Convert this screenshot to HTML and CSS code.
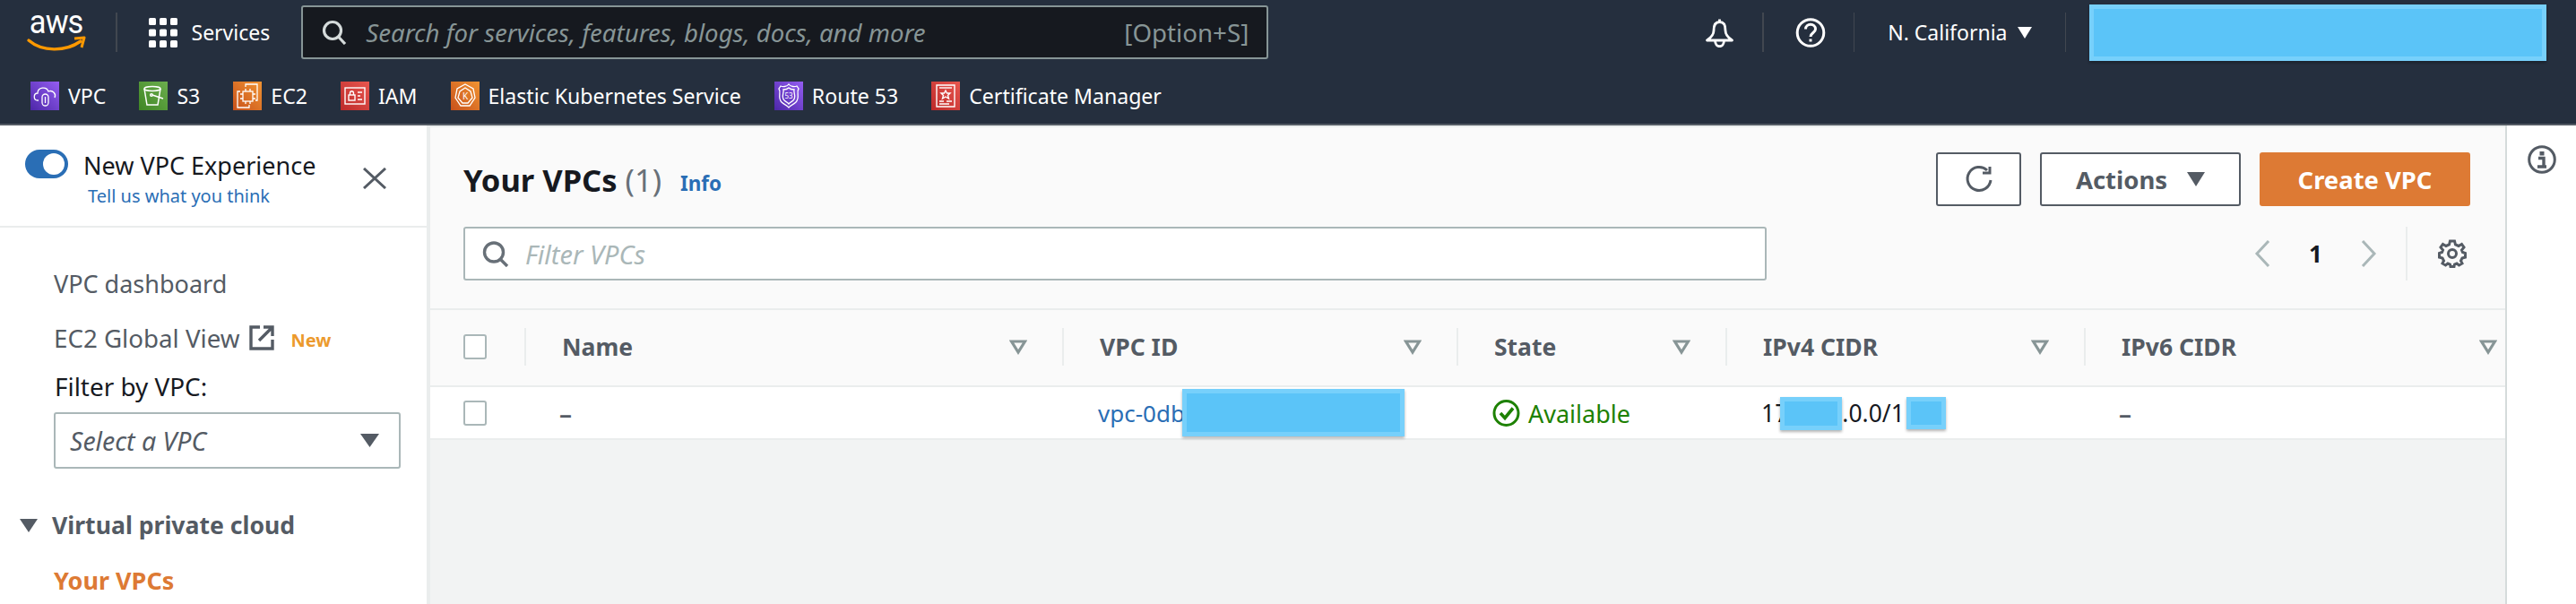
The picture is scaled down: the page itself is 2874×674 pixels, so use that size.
FILE: index.html
```html
<!DOCTYPE html>
<html lang="en">
<head>
<meta charset="utf-8">
<title>Your VPCs</title>
<link rel="stylesheet" href="styles.css">
</head>
<body>
<header class="topbar">
  <div class="top-row">
    <div class="aws-logo"><span class="aws-text">aws</span><svg width="64" height="16" viewBox="0 24 64 16"><path d="M1 28 C16 41 42 41 59 29" fill="none" stroke="#f90" stroke-width="3.4" stroke-linecap="round"/><path d="M52 26 L63 25 L60 36" fill="none" stroke="#f90" stroke-width="3" stroke-linejoin="round"/></svg></div>
    <span class="top-sep sep-logo"></span>
    <svg class="grid-icon" width="32" height="33" viewBox="0 0 32 33" fill="#fff"><rect width="8" height="8" rx="1.5"/><rect x="12" width="8" height="8" rx="1.5"/><rect x="24" width="8" height="8" rx="1.5"/><rect y="12.500" width="8" height="8" rx="1.5"/><rect x="12" y="12.500" width="8" height="8" rx="1.5"/><rect x="24" y="12.500" width="8" height="8" rx="1.500"/><rect y="25" width="8" height="8" rx="1.5"/><rect x="12" y="25" width="8" height="8" rx="1.5"/><rect x="24" y="25" width="8" height="8" rx="1.5"/></svg>
    <span class="services">Services</span>
    <div class="search">
      <svg width="28" height="28" viewBox="0 0 28 28" fill="none" stroke="#d5dbdb" stroke-width="3.200"><circle cx="12" cy="12" r="9.500"/><path d="M18.500 19 L26 27"/></svg>
      <span class="search-text">Search for services, features, blogs, docs, and more</span>
      <span class="search-key">[Option+S]</span>
    </div>
    <div class="top-right">
      <svg class="bell" width="33" height="33" viewBox="0 0 33 33" fill="none" stroke="#fff" stroke-width="2.800" stroke-linejoin="round"><path d="M16.500 1.500 V4.500 M16.500 4.500 C11 4.500 10 9 10 14 C10 19 7 22 2.500 25 H30.500 C26 22 23 19 23 14 C23 9 22 4.500 16.500 4.500 Z"/><path d="M11.500 25 C11.500 34 21.500 34 21.500 25"/></svg>
      <span class="top-sep sep-bell"></span>
      <svg class="help" width="34" height="33" viewBox="0 0 34 33" fill="none" stroke="#fff" stroke-width="3"><circle cx="17" cy="16.500" r="14.800"/><path d="M11.500 12.500 C11.500 5.500 22.500 5.500 22.500 12.500 C22.500 16.500 17 16.500 17 21"/><path d="M17 23.500 V26.500"/></svg>
      <span class="top-sep sep-help"></span>
      <span class="region">N. California</span>
      <svg class="region-caret" width="16" height="13" viewBox="0 0 16 13" fill="#fff"><path d="M0 0 H16 L8 13 Z"/></svg>
      <span class="top-sep sep-region"></span>
      <span class="redact redact-account"></span>
    </div>
  </div>
  <nav class="favorites">
    <a class="fav"><span class="svc svc-purple"><svg width="32" height="32" viewBox="0 0 32 32" fill="none" stroke="#fff" stroke-width="1.300"><path d="M9 21 H8 C3 21 3 13 8 13 C8 6 18 5 20 11 C25 9 29 14 27 18"/><rect x="13" y="14" width="7" height="13" rx="3.500"/><path d="M16.500 17 V24"/></svg></span><span>VPC</span></a>
    <a class="fav"><span class="svc svc-green"><svg width="32" height="32" viewBox="0 0 32 32" fill="none" stroke="#fff" stroke-width="1.500"><ellipse cx="15" cy="8" rx="9" ry="2.500"/><path d="M6 8 L9 26 H21 L24 8"/><circle cx="14" cy="15" r="1.300"/><path d="M15 15 L27 19"/></svg></span><span>S3</span></a>
    <a class="fav"><span class="svc svc-orange"><svg width="32" height="32" viewBox="0 0 32 32" fill="none" stroke="#fff" stroke-width="1.300"><rect x="11" y="11" width="11" height="11"/><path d="M14 8 V11 M19 8 V11 M14 22 V25 M19 22 V25 M8 14 H11 M8 19 H11 M22 14 H25 M22 19 H25"/><path d="M14 6 V3 H27 V21 H25 M18 26 V29 H5 V11 H8"/></svg></span><span>EC2</span></a>
    <a class="fav"><span class="svc svc-red"><svg width="32" height="32" viewBox="0 0 32 32" fill="none" stroke="#fff" stroke-width="1.400"><rect x="5" y="7" width="22" height="18"/><rect x="9" y="15" width="7" height="6"/><path d="M10.500 15 V13 C10.500 10 14.500 10 14.500 13 V15 M19 12 H24 M19 16 H22 M19 20 H24"/></svg></span><span>IAM</span></a>
    <a class="fav"><span class="svc svc-orange"><svg width="32" height="32" viewBox="0 0 32 32" fill="none" stroke="#fff" stroke-width="1.300"><path d="M16 3 L25 8 L27 18 L21 27 H11 L5 18 L7 8 Z"/><path d="M16 7 L22 11 L24 18 L19 24 H13 L8 18 L10 11 Z"/><text x="16" y="20" class="svc-text svc-k">K</text></svg></span><span>Elastic Kubernetes Service</span></a>
    <a class="fav"><span class="svc svc-purple"><svg width="32" height="32" viewBox="0 0 32 32" fill="none" stroke="#fff" stroke-width="1.300"><path d="M16 3 C18 6 23 6 25 5 L27 8 C24 12 29 18 24 23 C21 26 18 26 16 29 C14 26 11 26 8 23 C3 18 8 12 5 8 L7 5 C9 6 14 6 16 3 Z"/><path d="M16 7 C18 9 20 9 22 9 C21 13 25 17 21 21 C19 23 17 23 16 25 C15 23 13 23 11 21 C7 17 11 13 10 9 C12 9 14 9 16 7 Z"/><text x="16" y="19" class="svc-text svc-53">53</text></svg></span><span>Route 53</span></a>
    <a class="fav"><span class="svc svc-red"><svg width="32" height="32" viewBox="0 0 32 32" fill="none" stroke="#fff" stroke-width="1.400"><path d="M6 4 H26 V28 H6 Z"/><path d="M9 7 H23"/><path d="M16 10 L17.500 13 H21 L18.500 15.500 L19.500 19 L16 17 L12.500 19 L13.500 15.500 L11 13 H14.500 Z"/><path d="M9 22 H14 M17 22 H23 M9 25 H20"/></svg></span><span>Certificate Manager</span></a>
  </nav>
</header>

<div class="app">
  <aside class="sidebar">
    <div class="side-head">
      <span class="toggle"><span class="knob"></span></span>
      <div class="side-title">
        <div class="new-exp">New VPC Experience</div>
        <a class="tell">Tell us what you think</a>
      </div>
      <svg class="close" width="26" height="24" viewBox="0 0 26 24" fill="none" stroke="#545b64" stroke-width="3"><path d="M1 1 L25 23 M25 1 L1 23"/></svg>
    </div>
    <div class="side-link first">VPC dashboard</div>
    <div class="side-link ec2">EC2 Global View
      <svg class="ext" width="28" height="28" viewBox="0 0 28 28" fill="none" stroke="#545b64" stroke-width="3.400"><path d="M12 2 H2 V26 H26 V16" /><path d="M11 17 L25 3 M16 2 H26 V12" /></svg>
      <span class="new-badge">New</span>
    </div>
    <div class="filter-label">Filter by VPC:</div>
    <div class="select"><span>Select a VPC</span><svg width="21" height="15" viewBox="0 0 21 15" fill="#545b64"><path d="M0 0 H21 L10.500 15 Z"/></svg></div>
    <div class="side-section"><svg width="20" height="15" viewBox="0 0 20 15" fill="#545b64"><path d="M0 0 H20 L10 15 Z"/></svg><span>Virtual private cloud</span></div>
    <div class="side-active">Your VPCs</div>
  </aside>

  <main class="main">
    <div class="panel-head">
      <div class="title-row">
        <h1 class="title">Your VPCs <span class="count">(1)</span></h1>
        <a class="info">Info</a>
        <div class="actions">
          <button class="btn btn-icon"><svg width="32" height="32" viewBox="0 0 32 32" fill="none" stroke="#545b64" stroke-width="3"><path d="M25 6 A13 13 0 1 0 29 17"/><path d="M28 2 V9 H20"/></svg></button>
          <button class="btn btn-actions">Actions<svg width="20" height="16" viewBox="0 0 20 16" fill="#545b64"><path d="M0 0 H20 L10 16 Z"/></svg></button>
          <button class="btn btn-primary">Create VPC</button>
        </div>
      </div>
      <div class="filter-row">
        <div class="filter-box">
          <svg width="30" height="29" viewBox="0 0 30 29" fill="none" stroke="#687078" stroke-width="3.400"><circle cx="13" cy="12.500" r="10.500"/><path d="M20 20 L28 28"/></svg>
          <span>Filter VPCs</span>
        </div>
        <div class="pager">
          <svg width="18" height="30" viewBox="0 0 18 30" fill="none" stroke="#aab7b8" stroke-width="3"><path d="M16 1 L3 15 L16 29"/></svg>
          <span class="page-num">1</span>
          <svg width="18" height="30" viewBox="0 0 18 30" fill="none" stroke="#aab7b8" stroke-width="3"><path d="M2 1 L15 15 L2 29"/></svg>
          <span class="pager-sep"></span>
          <svg class="gear" width="32" height="32" viewBox="0 0 32 32" fill="none" stroke="#545b64" stroke-width="3"><circle cx="16" cy="16" r="4.500"/><path d="M13.500 2 H18.500 L19.500 6 L23 7.500 L26.500 5.500 L29 9 L26.500 12 L27.500 14.500 L30.500 15.500 V20 L27 21 L25.500 24 L27 27 L23.500 29 L21 27 L18.500 28 L18 30.500 H14 L13.500 28 L11 27 L8.500 29 L5 27 L6.500 24 L5 21 L1.500 20 V15.500 L4.500 14.500 L5.500 12 L3 9 L5.500 5.500 L9 7.500 L12.500 6 Z"/></svg>
        </div>
      </div>
    </div>
    <div class="table">
      <div class="thead">
        <div class="th th-check"><span class="check"></span></div>
        <div class="th"><span class="cell-in"><span>Name</span><svg class="sort" width="20" height="17" viewBox="0 0 20 17" fill="none" stroke="#879596" stroke-width="3.200" stroke-linejoin="miter"><path d="M2.500 2 H17.500 L10 14 Z"/></svg></span></div>
        <div class="th"><span class="cell-in"><span>VPC ID</span><svg class="sort" width="20" height="17" viewBox="0 0 20 17" fill="none" stroke="#879596" stroke-width="3.200"><path d="M2.500 2 H17.500 L10 14 Z"/></svg></span></div>
        <div class="th"><span class="cell-in"><span>State</span><svg class="sort" width="20" height="17" viewBox="0 0 20 17" fill="none" stroke="#879596" stroke-width="3.200"><path d="M2.500 2 H17.500 L10 14 Z"/></svg></span></div>
        <div class="th"><span class="cell-in"><span>IPv4 CIDR</span><svg class="sort" width="20" height="17" viewBox="0 0 20 17" fill="none" stroke="#879596" stroke-width="3.200"><path d="M2.500 2 H17.500 L10 14 Z"/></svg></span></div>
        <div class="th th-last"><span class="cell-in"><span>IPv6 CIDR</span><svg class="sort" width="20" height="17" viewBox="0 0 20 17" fill="none" stroke="#879596" stroke-width="3.200"><path d="M2.500 2 H17.500 L10 14 Z"/></svg></span></div>
      </div>
      <div class="trow">
        <div class="td td-check"><span class="check"></span></div>
        <div class="td td-dash">–</div>
        <div class="td td-id"><a class="link">vpc-0db</a><span class="redact redact-id"></span></div>
        <div class="td td-state"><svg width="31" height="32" viewBox="0 0 31 32" fill="none" stroke="#1d8102" stroke-width="3"><circle cx="15.500" cy="16" r="13.500"/><path d="M9 16 L14 21.500 L23 10.500" stroke-width="3.600"/></svg><span>Available</span></div>
        <div class="td td-cidr">17<span class="redact redact-a"></span>.0.0/1<span class="redact redact-b"></span></div>
        <div class="td td-dash">–</div>
      </div>
    </div>
  </main>

  <aside class="rail">
    <svg width="32" height="32" viewBox="0 0 32 32" fill="none" stroke="#545b64" stroke-width="3"><circle cx="16" cy="16" r="14.300"/><rect x="13.500" y="7" width="5" height="4.500" fill="#545b64" stroke="none"/><path d="M12 14.500 H18 V23 M11 24 H21" stroke-width="3.400"/></svg>
  </aside>
</div>
</body>
</html>
```
FILE: styles.css
```css
* { box-sizing: border-box; }
html, body { margin: 0; height: 674px; overflow: hidden; }
body { font-family: "Noto Sans", "Open Sans", sans-serif; font-size: 27px; color: #16191f; background: #fff; display: flex; flex-direction: column; }
a { text-decoration: none; }

/* top bar */
.topbar { background: #252f3e; height: 140px; border-bottom: 2px solid #545b64; flex: none; }
.top-row { display: flex; align-items: center; height: 72px; padding-left: 31px; padding-right: 33px; }
.aws-logo { flex: none; width: 64px; display: flex; flex-direction: column; }
.aws-logo svg { display: block; margin-top: 7px; overflow: visible; }
.aws-text { display: block; font-family: Roboto, sans-serif; font-size: 37px; line-height: 19px; letter-spacing: -1px; color: #fff; padding-left: 2px; transform: scaleX(.93); transform-origin: left center; }
.svc-text { font-family: "Noto Sans", sans-serif; fill: #fff; stroke: none; text-anchor: middle; }
.svc-k { font-size: 10px; }
.svc-53 { font-size: 8px; }
.top-sep { width: 1.500px; height: 44px; background: #414750; flex: none; }
.sep-logo { margin-left: 34px; margin-right: 35px; }
.services { color: #fff; font-size: 23px; margin-left: 16px; }
.search { margin-left: 35px; width: 1079px; height: 60px; flex: none; background: #16191f; border: 2px solid #879596; border-radius: 3px; display: flex; align-items: center; padding: 0 20px 0 21px; }
.search-text { font-style: italic; color: #879596; font-size: 27.600px; margin-left: 21px; flex: 1; }
.search-key { color: #879596; font-size: 27.700px; }
.top-right { margin-left: auto; display: flex; align-items: center; }
.sep-bell { margin-left: 31px; margin-right: 35px; }
.sep-help { margin-left: 31px; margin-right: 37px; }
.region { color: #fff; font-size: 23px; }
.region-caret { margin-left: 11px; }
.sep-region { margin-left: 37px; margin-right: 26px; }

.redact { display: inline-block; background: #5bc4f8; border: 5px solid #77d0fb; box-shadow: 0 2px 3px rgba(0, 0, 0, .3); flex: none; }
.redact-account { width: 510px; height: 63px; }

.favorites { display: flex; align-items: center; padding: 19px 0 0 34px; gap: 37px; }
.fav { display: flex; align-items: center; gap: 10px; color: #fff; font-size: 23.100px; }
.svc { width: 32px; height: 32px; display: block; flex: none; }
.svc svg { display: block; }
.svc-purple { background: linear-gradient(45deg, #4d27a8, #945df2); }
.svc-green { background: linear-gradient(45deg, #3f8624, #6cae4e); }
.svc-orange { background: linear-gradient(45deg, #c8511b, #f09433); }
.svc-red { background: linear-gradient(45deg, #bd2a2a, #e8574f); }

/* layout */
.app { display: flex; flex: 1; min-height: 0; }
.sidebar { width: 480px; flex: none; border-right: 4px solid #eaeded; background: #fff; }
.main { flex: 1; min-width: 0; background: #f2f3f3; display: flex; flex-direction: column; }
.rail { width: 79px; flex: none; background: #fff; border-left: 2px solid #d5dbdb; padding: 22px 0 0 23px; }
.rail svg { display: block; }

/* sidebar */
.side-head { height: 114px; border-bottom: 2px solid #eaeded; padding: 27px 45px 0 28px; display: flex; align-items: flex-start; }
.toggle { width: 48px; height: 32px; border-radius: 16px; background: #2a6eb5; flex: none; position: relative; margin-right: 17px; }
.knob { position: absolute; right: 4px; top: 4px; width: 24px; height: 24px; border-radius: 50%; background: #fff; }
.side-title { margin-top: 2px; }
.new-exp { line-height: 32px; font-size: 27px; color: #16191f; }
.tell { display: block; margin: 4px 0 0 5px; line-height: 28px; font-size: 20px; color: #2a6eb5; }
.close { margin-left: auto; margin-top: 20px; flex: none; }
.side-link { margin-left: 60px; line-height: 36px; color: #545b64; font-size: 27px; }
.side-link.first { margin-top: 45px; }
.ec2 { margin-top: 21px; display: flex; align-items: center; font-size: 27.700px; }
.ext { margin-left: 11px; flex: none; }
.new-badge { color: #ec9a2d; font-weight: 700; font-size: 20px; margin-left: 18px; margin-top: 6px; }
.filter-label { margin: 15px 0 0 61px; line-height: 36px; font-size: 27.900px; color: #16191f; }
.select { margin: 11px 0 0 60px; width: 387px; height: 63px; border: 2px solid #aab7b8; border-radius: 3px; background: #fff; display: flex; align-items: center; justify-content: space-between; padding: 0 22px 0 16px; font-style: italic; color: #545b64; font-size: 28.500px; }
.side-section { display: flex; align-items: center; gap: 16px; margin: 45px 0 0 22px; line-height: 36px; font-weight: 700; color: #545b64; font-size: 26.600px; }
.side-active { margin: 26px 0 0 60px; line-height: 36px; font-weight: 700; color: #dd7a34; font-size: 27px; }

/* panel */
.panel-head { background: #fafafa; border-top: 2px solid #eaeded; padding: 28px 39px 0 37px; height: 204px; flex: none; }
.title-row { display: flex; align-items: center; height: 60px; }
.title { margin: 0; font-size: 34.500px; font-weight: 700; color: #16191f; }
.count { font-weight: 400; color: #687078; }
.info { color: #2a6eb5; font-weight: 700; font-size: 22.500px; margin-left: 21px; margin-top: 8px; }
.actions { margin-left: auto; display: flex; gap: 21px; }
.btn { height: 60px; border: 2px solid #545b64; border-radius: 3px; background: #fff; font: inherit; font-weight: 700; color: #545b64; display: flex; align-items: center; justify-content: center; }
.btn-icon { width: 95px; padding: 0; }
.btn-actions { width: 224px; gap: 22px; font-size: 27.500px; }
.btn-primary { width: 235px; background: #dd7a34; border-color: #dd7a34; color: #fff; font-size: 27.400px; }
.filter-row { display: flex; align-items: center; margin-top: 23px; }
.filter-box { width: 1454px; height: 60px; background: #fff; border: 2px solid #aab7b8; border-radius: 3px; display: flex; align-items: center; gap: 18px; padding-left: 19px; font-style: italic; color: #aab7b8; font-size: 29px; flex: none; }
.pager { margin-left: auto; margin-right: 4px; display: flex; align-items: center; }
.page-num { width: 101px; text-align: center; font-weight: 700; font-size: 26px; color: #16191f; }
.pager-sep { width: 2px; height: 60px; background: #eaeded; margin: 0 34px 0 32px; }

/* table */
.table { flex: none; }
.thead, .trow { display: grid; grid-template-columns: 105px 600px 440px 300px 400px 1fr; }
.thead { background: #fafafa; border-top: 2px solid #eaeded; border-bottom: 2px solid #eaeded; height: 88px; padding: 20px 0 22px; }
.trow { background: #fff; height: 59px; border-bottom: 2px solid #eaeded; }
.th { height: 42px; border-left: 2px solid #eaeded; display: flex; align-items: center; font-weight: 700; color: #545b64; font-size: 26.500px; }
.th-check { border-left: 0; padding-left: 37px; }
.cell-in { display: flex; align-items: center; justify-content: space-between; width: 100%; padding: 0 39px 0 40px; }
.th-last .cell-in { padding-right: 9px; }
.check { display: block; width: 26px; height: 28px; background: #fff; border: 2px solid #aab7b8; border-radius: 3px; }
.td { display: flex; align-items: center; padding-left: 40px; font-size: 26.500px; color: #16191f; padding-top: 1px; }
.td-check { padding: 0 0 0 37px; }
.td-dash { padding-left: 39px; color: #545b64; font-size: 28px; font-weight: 600; }
.link { color: #2a6eb5; font-size: 26px; }
.redact-id { width: 248px; height: 53px; margin-left: -3px; margin-top: -1px; }
.td-state { gap: 9px; color: #1d8102; font-size: 27px; }
.td-state svg { flex: none; }
.td-cidr { white-space: nowrap; }
.redact-a { width: 69px; height: 37px; margin-left: -9px; }
.redact-b { width: 44px; height: 36px; margin-left: 2px; }
```
